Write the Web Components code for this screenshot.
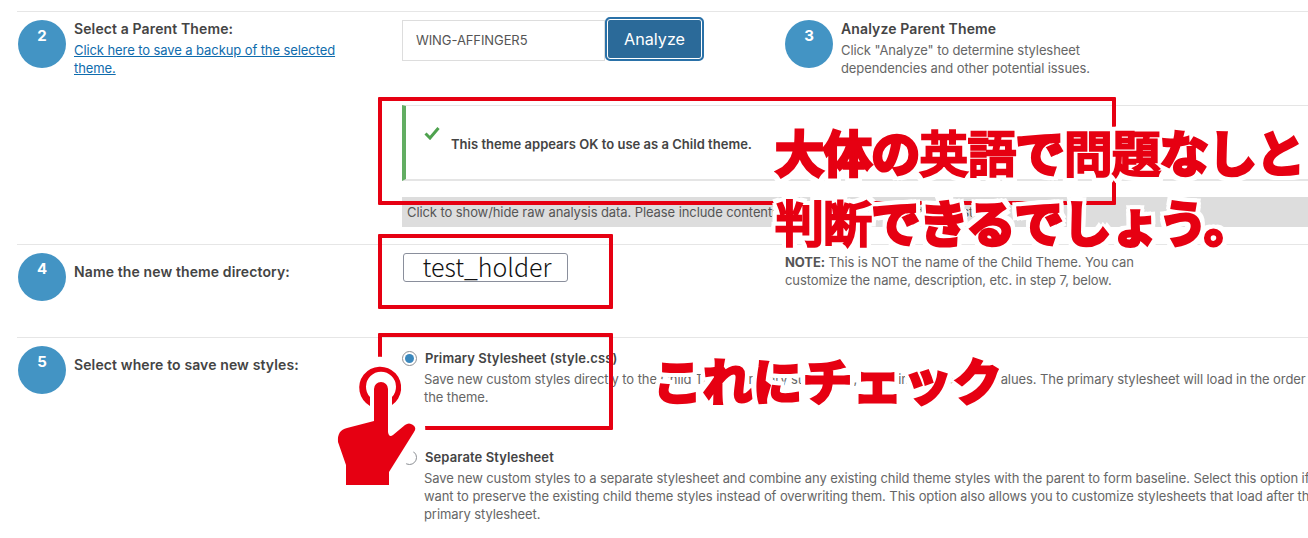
<!DOCTYPE html>
<html lang="en">
<head>
<meta charset="utf-8">
<title>Child Theme Configurator</title>
<style>
    html, body { margin: 0; background: #fff; }
    body {
        width: 1308px;
        height: 538px;
        overflow: hidden;
        position: relative;
        font: 13px/18px Inter, "Liberation Sans", sans-serif;
        letter-spacing: -0.09px;
        color: #666;
    }
    .main { padding-top: 11px; }
    a { color: #0f6cad; }
    strong { color: #555; }
    /* dense kanji fill in at the heavy weight */
    mark-text span { font-weight: 500; -webkit-text-stroke-width: 2.4px; }
</style>
</head>
<body>
<div class="main">
    <step-row style="padding-bottom:17px">
        <step-badge>2</step-badge>
        <div>
            <step-title>Select a Parent Theme:</step-title>
            <a href="#">Click here to save a backup of the selected<br>theme.</a>
        </div>
        <theme-picker slot="control" value="WING-AFFINGER5"></theme-picker>
        <step-badge slot="help">3</step-badge>
        <div slot="help">
            <step-title>Analyze Parent Theme</step-title>
            Click "Analyze" to determine stylesheet<br>dependencies and other potential issues.
        </div>
        <analysis-result slot="below">This theme appears OK to use as a Child theme.</analysis-result>
    </step-row>
    <step-row style="padding-bottom:36px">
        <step-badge>4</step-badge>
        <step-title style="margin-top:10px">Name the new theme directory:</step-title>
        <name-field slot="control">test_holder</name-field>
        <div slot="help"><strong>NOTE:</strong> This is NOT the name of the Child Theme. You can<br>customize the name, description, etc. in step 7, below.</div>
    </step-row>
    <step-row>
        <step-badge>5</step-badge>
        <step-title style="margin-top:10px">Select where to save new styles:</step-title>
        <div slot="control" style="width:906px">
            <radio-option checked label="Primary Stylesheet (style.css)">Save new custom styles directly to the Child Theme primary stylesheet, replacing the existing values. The primary stylesheet will load in the order set by<br>the theme.</radio-option>
            <radio-option style="margin-top:42px" label="Separate Stylesheet">Save new custom styles to a separate stylesheet and combine any existing child theme styles with the parent to form baseline. Select this option if you<br>want to preserve the existing child theme styles instead of overwriting them. This option also allows you to customize stylesheets that load after the<br>primary stylesheet.</radio-option>
        </div>
    </step-row>
</div>

<mark-box style="left:378px;top:97px;width:738px;height:108px"></mark-box>
<mark-box style="left:378px;top:234px;width:235px;height:75px"></mark-box>
<mark-box style="left:378px;top:333px;width:235px;height:97px"></mark-box>
<tap-hand style="left:328px;top:356px"></tap-hand>
<mark-text style="left:775px;top:121px">大体の<span>英語</span>で<span>問題</span>なしと</mark-text>
<mark-text style="left:775px;top:191px"><span>判断</span>できるでしょう。</mark-text>
<mark-text style="left:653px;top:349px;letter-spacing:1px">これにチェック</mark-text>

<script>
function define(name, css, html) {
    customElements.define(name, class extends HTMLElement {
        constructor() {
            super();
            this.attachShadow({mode: 'open'}).innerHTML = `<style>${css}</style>${html(this)}`;
        }
    });
}

define('step-badge', `
    :host { display: block; flex: none; width: 48px; height: 48px; border-radius: 50%; background: #4394c4;
            color: #fff; font-weight: 700; font-size: 15px; line-height: 32px; text-align: center; }
`, () => `<slot></slot>`);

define('step-title', `
    :host { display: block; color: #444; font-weight: 600; font-size: 14px; letter-spacing: 0.12px; margin-bottom: 3px; }
`, () => `<slot></slot>`);

define('step-row', `
    :host { display: block; margin-left: 17px; border-top: 1px solid #e6e6e6; padding: 8px 0 0 1px; }
    .cols { display: grid; grid-template-columns: 384px 383px 1fr; }
    .side { display: flex; gap: 8px; align-items: flex-start; }
`, () => `<div class="cols">
        <div class="side"><slot></slot></div>
        <div><slot name="control"></slot></div>
        <div class="side"><slot name="help"></slot></div>
    </div>
    <slot name="below"></slot>`);

define('theme-picker', `
    :host { display: flex; align-items: flex-start; }
    .input { box-sizing: border-box; width: 203px; height: 41px; border: 1px solid #ddd;
             padding-left: 13px; line-height: 39px; color: #555; background: #fff; }
    button { box-sizing: border-box; width: 99px; height: 44px; margin-top: -3px; border-radius: 5px;
             border: 2px solid #2a71a8; background: #2b6a99; color: #fff; font: 16.2px Inter, sans-serif;
             box-shadow: inset 0 0 0 1px #fff; }
`, (el) => `<div class="input">${el.getAttribute('value')}</div><button>Analyze</button>`);

define('analysis-result', `
    :host { display: block; margin: 28px 0 0 384px; }
    .notice { box-sizing: border-box; height: 76px; border-left: 4px solid #62ad62; border-top: 1px solid #e5e5e5;
              border-bottom: 2px solid #e5e5e5; display: flex; align-items: flex-start; padding: 20px 0 0 18px; }
    svg { width: 16px; height: 14px; flex: none; }
    p { margin: 9px 0 0 11px; font-weight: 600; color: #444; letter-spacing: 0.02px; }
    .raw { margin-top: 16px; height: 30px; background: #ddd; padding-left: 5px; line-height: 31px; color: #555;
           white-space: nowrap; overflow: hidden; }
`, () => `<div class="notice">
        <svg viewBox="0 0 16 14"><path d="M1.5 7.5 L6 12 L14.5 2" fill="none" stroke="#4ea24e" stroke-width="3"/></svg>
        <p><slot></slot></p>
    </div>
    <div class="raw">Click to show/hide raw analysis data. Please include contents below with any support requests.</div>`);

define('name-field', `
    :host { display: block; box-sizing: border-box; width: 165px; height: 29px; margin-left: 1px; border: 1px solid #8a8f9c;
            border-radius: 3px; background: #fff; color: #111; text-align: center; letter-spacing: 0;
            padding-left: 3px; font: 25px/25px "Noto Sans CJK JP", sans-serif; font-weight: 300; }
`, () => `<slot></slot>`);

define('radio-option', `
    :host { display: grid; grid-template-columns: 22px 1fr; white-space: nowrap; margin-top: 3px; }
    .radio { box-sizing: border-box; width: 15px; height: 15px; margin-top: 2px; border: 1px solid #8c8f94;
             border-radius: 50%; display: flex; align-items: center; justify-content: center; }
    .dot { width: 9px; height: 9px; border-radius: 50%; background: #3b88bd; }
    b { color: #444; font-weight: 600; display: block; margin: 0 0 3px 1px; letter-spacing: 0.1px; }
`, (el) => `<div class="radio">${el.hasAttribute('checked') ? '<div class="dot"></div>' : ''}</div>
    <div><b>${el.getAttribute('label')}</b><slot></slot></div>`);

define('mark-box', `
    :host { display: block; position: absolute; box-sizing: border-box; border: 4px solid #e60012; border-radius: 1px; }
`, () => ``);

define('mark-text', `
    :host { display: block; position: absolute; white-space: nowrap; color: #e60012; letter-spacing: -0.9px;
            font: 700 49px/60px "Noto Sans CJK JP", sans-serif;
            -webkit-text-stroke: 3.2px #e60012;
            filter: drop-shadow(4px 0 0 #fff) drop-shadow(-4px 0 0 #fff) drop-shadow(0 4px 0 #fff) drop-shadow(0 -4px 0 #fff); }
`, () => `<slot></slot>`);

define('tap-hand', `
    :host { display: block; position: absolute; width: 100px; height: 140px; }
    svg { display: block; overflow: visible; }
    .halo { fill: #fff; stroke: #fff; stroke-width: 20px; stroke-linejoin: round; }
    .ink { fill: #e60012; }
`, () => {
    const ring = 'M370 406 A21 21 0 1 1 392 405 L392 397 A15 15 0 1 0 370 397 Z';
    const hand = 'M374 389 A7 7 0 0 1 388 389 L388 432 Q389 438 393 435 L405 425 Q409 422 413 425 Q417 428 414 432 L389 472 L389 485 L346 485 L346 465 L338 442 Q337 430 347 428 L374 421 Z';
    return `<svg width="100" height="140" viewBox="328 356 100 140">
        <path class="halo" d="${ring}"/><path class="halo" d="${hand}"/>
        <path class="ink" d="${ring}"/>
        <path d="${hand}" fill="#fff" stroke="#fff" stroke-width="6"/>
        <path class="ink" d="${hand}"/>
    </svg>`;
});
</script>
</body>
</html>
